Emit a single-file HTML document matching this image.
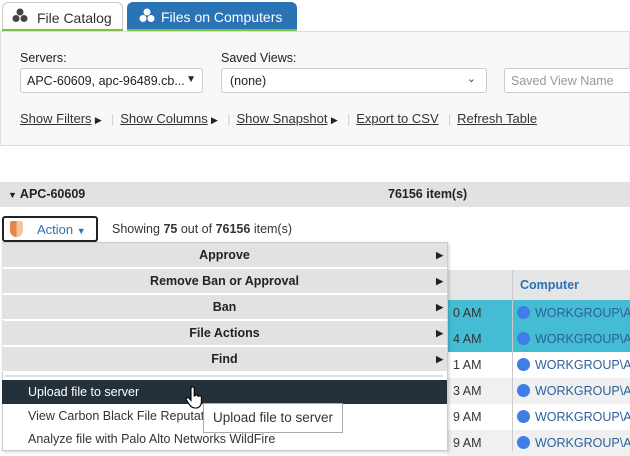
<!DOCTYPE html>
<html><head><style>
*{box-sizing:border-box;margin:0;padding:0}
body{width:630px;height:451px;overflow:hidden;background:#fff;font-family:"Liberation Sans",sans-serif;font-size:12px;color:#222;position:relative}
.a{position:absolute}
.tab{position:absolute;top:2px;height:28px;border-radius:6px 6px 0 0;font-size:14px;padding:7px 0 0 34px;white-space:nowrap}
.u{text-decoration:underline;color:#333;font-size:13px}
.row{position:absolute;left:2px;width:445px;height:25px;background:#e2e2e2;border-bottom:1px solid #fff;text-align:center;font-weight:bold;font-size:12.5px;line-height:25px}
.row .ar{position:absolute;right:4px;top:0;font-size:9px}
.tr{position:absolute;left:447px;width:183px;height:26px;font-size:12.5px;line-height:26px;overflow:hidden;white-space:nowrap}
.tr span.t{position:absolute;left:6px;color:#333}
.tr span.c{position:absolute;left:70px;color:#2d5f9a;white-space:nowrap}
.tr span.c:before{content:"";display:inline-block;width:13px;height:13px;border-radius:50%;background:#3f7ee6;vertical-align:-2px;margin-right:5px}
</style></head><body>
<div class="tab" style="left:2px;width:121px;border:1px solid #ccc;border-bottom:none;background:#fff;color:#333">File Catalog</div>
<svg class="a" style="left:12px;top:8px" width="16" height="15"><circle cx="8" cy="4" r="3.5" fill="#444"/><circle cx="4" cy="10.5" r="3.5" fill="#444"/><circle cx="12" cy="10.5" r="3.5" fill="#444"/></svg>
<div class="tab" style="left:127px;width:170px;background:#2a73b5;color:#fff">Files on Computers</div>
<svg class="a" style="left:139px;top:8px" width="16" height="15"><circle cx="8" cy="4" r="3.5" fill="#fff"/><circle cx="4" cy="10.5" r="3.5" fill="#fff"/><circle cx="12" cy="10.5" r="3.5" fill="#fff"/></svg>
<div class="a" style="left:2px;top:29px;width:121px;height:3px;background:#7cc242"></div>
<div class="a" style="left:127px;top:29px;width:170px;height:3px;background:#7cc242"></div>
<div class="a" style="left:0;top:31px;width:630px;height:115px;background:#f8f8f8;border:1px solid #ddd"></div>
<div class="a" style="left:20px;top:51px;font-size:12.5px">Servers:</div>
<div class="a" style="left:221px;top:51px;font-size:12.5px">Saved Views:</div>
<div class="a" style="left:20px;top:68px;width:183px;height:25px;background:#fff;border:1px solid #ccc;border-radius:3px;padding:5px 6px;font-size:12.5px;white-space:nowrap">APC-60609, apc-96489.cb...<span style="position:absolute;right:6px;top:5px;font-size:10px">&#9660;</span></div>
<div class="a" style="left:221px;top:68px;width:266px;height:25px;background:#fff;border:1px solid #ccc;border-radius:3px;padding:5px 8px;font-size:12.5px">(none)<span style="position:absolute;right:10px;top:3px;font-size:11px;color:#444">&#8964;</span></div>
<div class="a" style="left:504px;top:68px;width:130px;height:25px;background:#fff;border:1px solid #ccc;border-radius:3px;padding:5px 6px;font-size:12.5px;color:#999;white-space:nowrap">Saved View Name</div>
<div class="a" style="left:20px;top:111px;white-space:nowrap"><span class="u">Show Filters</span> <span style="font-size:9px">&#9654;</span> <span style="color:#ccc;margin:0 6px">|</span><span class="u">Show Columns</span> <span style="font-size:9px">&#9654;</span> <span style="color:#ccc;margin:0 6px">|</span><span class="u">Show Snapshot</span> <span style="font-size:9px">&#9654;</span> <span style="color:#ccc;margin:0 6px">|</span><span class="u">Export to CSV</span> <span style="color:#ccc;margin:0 6px">|</span><span class="u">Refresh Table</span></div>
<div class="a" style="left:0;top:182px;width:630px;height:25px;background:#e2e2e2;font-weight:bold;font-size:12.5px;line-height:25px;padding-left:8px"><span style="font-size:9px">&#9660;</span> APC-60609<span style="position:absolute;left:388px">76156 item(s)</span></div>
<div class="a" style="left:2px;top:216px;width:96px;height:26px;border:2px solid #222;border-radius:3px;background:#fff"></div>
<div class="a" style="left:10px;top:221px;width:13px;height:16px;background:linear-gradient(90deg,#e8844a 50%,#f5c3a0 50%);border-radius:2px 2px 7px 7px"></div>
<div class="a" style="left:37px;top:222px;color:#2a73b5;font-size:13px">Action <span style="font-size:9px">&#9660;</span></div>
<div class="a" style="left:112px;top:222px;font-size:12.5px;color:#333">Showing <b>75</b> out of <b>76156</b> item(s)</div>
<div class="a" style="left:447px;top:270px;width:183px;height:30px;background:#e5e5e5"></div>
<div class="tr" style="top:300px;background:#44bcd4"><span class="t">0 AM</span><span class="c">WORKGROUP\A</span></div>
<div class="tr" style="top:326px;background:#44bcd4"><span class="t">4 AM</span><span class="c">WORKGROUP\A</span></div>
<div class="tr" style="top:352px;background:#fff"><span class="t">1 AM</span><span class="c">WORKGROUP\A</span></div>
<div class="tr" style="top:378px;background:#f0f0f0"><span class="t">3 AM</span><span class="c">WORKGROUP\A</span></div>
<div class="tr" style="top:404px;background:#fff"><span class="t">9 AM</span><span class="c">WORKGROUP\A</span></div>
<div class="tr" style="top:430px;background:#f0f0f0"><span class="t">9 AM</span><span class="c">WORKGROUP\A</span></div>
<div class="a" style="left:512px;top:270px;width:1px;height:181px;background:#ccc"></div>
<div class="a" style="left:520px;top:278px;color:#2a73b5;font-weight:bold;font-size:12.5px">Computer</div>
<div class="a" style="left:2px;top:242px;width:446px;height:209px;background:#fff;border:1px solid #ccc;box-shadow:1px 1px 3px rgba(0,0,0,.2)"></div>
<div class="row" style="top:243px">Approve<span class="ar">&#9654;</span></div>
<div class="row" style="top:269px">Remove Ban or Approval<span class="ar">&#9654;</span></div>
<div class="row" style="top:295px">Ban<span class="ar">&#9654;</span></div>
<div class="row" style="top:321px">File Actions<span class="ar">&#9654;</span></div>
<div class="row" style="top:347px">Find<span class="ar">&#9654;</span></div>
<div class="a" style="left:5px;top:375px;width:438px;height:2px;background:#ddd"></div>
<div class="a" style="left:2px;top:380px;width:445px;height:24px;background:#25313a;color:#fff;font-size:12.5px;line-height:24px;padding-left:26px">Upload file to server</div>
<div class="a" style="left:28px;top:409px;font-size:12.5px;color:#333">View Carbon Black File Reputation</div>
<div class="a" style="left:28px;top:432px;font-size:12.5px;color:#333">Analyze file with Palo Alto Networks WildFire</div>
<div class="a" style="left:203px;top:403px;width:140px;height:30px;background:#fff;border:1px solid #aaa;font-size:13.5px;line-height:28px;padding-left:9px;color:#333;white-space:nowrap">Upload file to server</div>
<svg class="a" style="left:185px;top:386px" width="18" height="24"><path d="M6 2.5a1.6 1.6 0 0 1 3.2 0V10l1-.3a1.5 1.5 0 0 1 2.8.6l.8-.1a1.5 1.5 0 0 1 2.6.9V16c0 3-2 6-5.5 6H9.5C7 22 5.5 20 4 18L1.5 14a1.5 1.5 0 0 1 2.4-1.8L6 14.5Z" fill="#fff" stroke="#000" stroke-width="1.1"/></svg>
</body></html>
